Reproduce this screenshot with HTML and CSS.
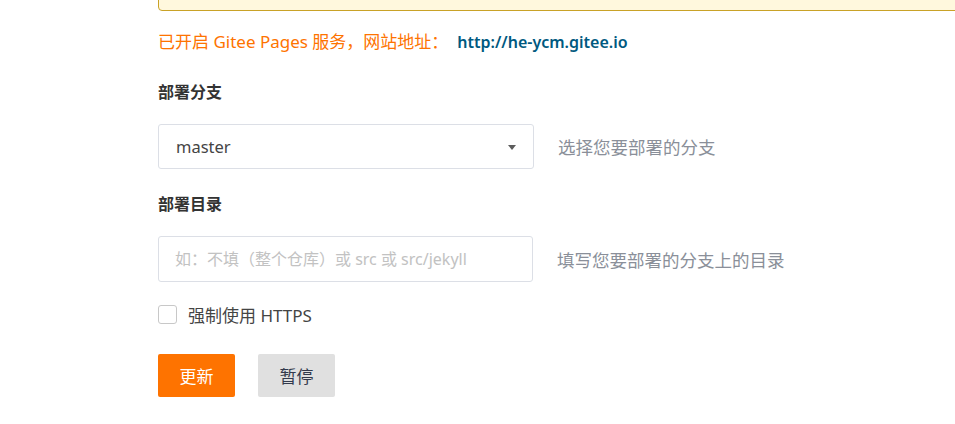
FILE: index.html
```html
<!DOCTYPE html>
<html lang="zh-CN">
<head>
<meta charset="utf-8">
<title>Gitee Pages</title>
<link rel="stylesheet" href="styles.css">
</head>
<body>
<div class="page">
  <div class="notice"></div>
  <p class="status">
    <span class="status-text">已开启 Gitee Pages 服务，网站地址：</span>
    <a class="site-link" href="#">http://he-ycm.gitee.io</a>
  </p>

  <div class="field">
    <label class="field-label">部署分支</label>
    <div class="field-row">
      <div class="select">
        <span class="select-value">master</span>
        <span class="caret"></span>
      </div>
      <span class="hint">选择您要部署的分支</span>
    </div>
  </div>

  <div class="field">
    <label class="field-label">部署目录</label>
    <div class="field-row">
      <input class="text-input" type="text" placeholder="如：不填（整个仓库）或 src 或 src/jekyll">
      <span class="hint">填写您要部署的分支上的目录</span>
    </div>
  </div>

  <label class="check">
    <span class="check-box"></span>
    <span class="check-label">强制使用 HTTPS</span>
  </label>

  <div class="actions">
    <button class="btn btn-primary" type="button">更新</button>
    <button class="btn btn-default" type="button">暂停</button>
  </div>
</div>
</body>
</html>
```

FILE: styles.css
```css
html, body {
  margin: 0;
  padding: 0;
  background: #ffffff;
}

body {
  font-family: "Noto Sans", "Noto Sans CJK SC", sans-serif;
  color: #333333;
  overflow: hidden;
}

.page {
  margin-left: 158px;
  width: 797px;
}

.notice {
  margin-top: -30px;
  height: 39px;
  margin-right: -10px;
  background: #fff8dd;
  border: 1px solid #c9a227;
  border-radius: 4px;
}

.status {
  margin: 19px 0 0;
  height: 24px;
  line-height: 24px;
  font-size: 17px;
  display: flex;
  align-items: center;
}

.status-text {
  color: #fe7300;
}

.site-link {
  margin-left: 9px;
  color: #005980;
  font-weight: 600;
  text-decoration: none;
  font-size: 16px;
}

.field {
  display: flex;
  flex-direction: column;
}

.field-label {
  display: block;
  margin-top: 26px;
  height: 24px;
  line-height: 24px;
  font-size: 16px;
  font-weight: 700;
  color: #333333;
}

.field + .field .field-label {
  margin-top: 23px;
}

.field-row {
  display: flex;
  align-items: center;
  margin-top: 20px;
}

.select {
  box-sizing: border-box;
  width: 376px;
  height: 45px;
  border: 1px solid #dcdfe6;
  border-radius: 3px;
  display: flex;
  align-items: center;
  justify-content: space-between;
  padding: 0 17px 0 17px;
}

.select-value {
  font-size: 16.5px;
  color: #444444;
}

.caret {
  width: 0;
  height: 0;
  border-left: 4.5px solid transparent;
  border-right: 4.5px solid transparent;
  border-top: 5px solid #5c5c5c;
  margin-top: 2px;
}

.text-input {
  box-sizing: border-box;
  width: 375px;
  height: 46px;
  border: 1px solid #dcdfe6;
  border-radius: 3px;
  padding: 0 16px;
  font-family: "Noto Sans", "Noto Sans CJK SC", sans-serif;
  font-size: 16px;
  outline: none;
  margin: 0;
}

.text-input::placeholder {
  color: #c2c2c2;
}

.hint {
  margin-left: 24px;
  font-size: 17.5px;
  color: #8a8f99;
}

.check {
  display: flex;
  align-items: center;
  margin-top: 21px;
  height: 22px;
}

.check-box {
  box-sizing: border-box;
  width: 19px;
  height: 19px;
  border: 1px solid #c8c8c8;
  border-radius: 3px;
  background: #ffffff;
}

.check-label {
  margin-left: 11px;
  font-size: 17px;
  color: #444444;
}

.actions {
  display: flex;
  gap: 23px;
  margin-top: 29px;
}

.btn {
  width: 77px;
  height: 43px;
  border: none;
  border-radius: 2px;
  font-family: "Noto Sans", "Noto Sans CJK SC", sans-serif;
  font-size: 17px;
  padding: 0;
  cursor: pointer;
}

.btn-primary {
  background: #fe7300;
  color: #ffffff;
}

.btn-default {
  background: #e0e0e0;
  color: #333a4d;
}
```
